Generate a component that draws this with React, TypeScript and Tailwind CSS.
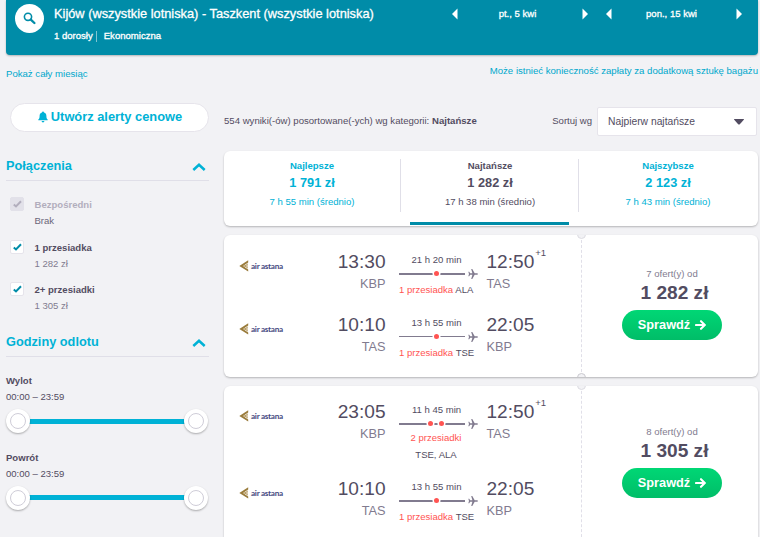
import React from 'react';

interface Leg {
  departure: string;
  from: string;
  arrival: string;
  to: string;
  nextDay?: string;
  duration: string;
  stops: string;
  via: string;
  stopCount: number;
  thin?: boolean;
}

interface Ticket {
  id: number;
  offers: string;
  price: string;
  legs: Leg[];
}

const returnLeg: Leg = {
  departure: '10:10', from: 'TAS', arrival: '22:05', to: 'KBP',
  duration: '13 h 55 min', stops: '1 przesiadka', via: 'TSE', stopCount: 1,
};

const tickets: Ticket[] = [
  {
    id: 1,
    offers: '7 ofert(y) od',
    price: '1 282 zł',
    legs: [
      { departure: '13:30', from: 'KBP', arrival: '12:50', to: 'TAS', nextDay: '+1', duration: '21 h 20 min', stops: '1 przesiadka', via: 'ALA', stopCount: 1 },
      { ...returnLeg, thin: true },
    ],
  },
  {
    id: 2,
    offers: '8 ofert(y) od',
    price: '1 305 zł',
    legs: [
      { departure: '23:05', from: 'KBP', arrival: '12:50', to: 'TAS', nextDay: '+1', duration: '11 h 45 min', stops: '2 przesiadki', via: 'TSE, ALA', stopCount: 2 },
      returnLeg,
    ],
  },
];

const tabs = [
  { label: 'Najlepsze', price: '1 791 zł', time: '7 h 55 min (średnio)', active: false },
  { label: 'Najtańsze', price: '1 282 zł', time: '17 h 38 min (średnio)', active: true },
  { label: 'Najszybsze', price: '2 123 zł', time: '7 h 43 min (średnio)', active: false },
];

const stopFilters = [
  { label: 'Bezpośredni', price: 'Brak', disabled: true },
  { label: '1 przesiadka', price: '1 282 zł', disabled: false },
  { label: '2+ przesiadki', price: '1 305 zł', disabled: false },
];

const Arrow: React.FC<{ left?: boolean }> = ({ left }) => (
  <svg width="6" height="12" viewBox="0 0 6 12" fill="#fff">
    <path d={left ? 'M5.5 .5v11L0 6z' : 'M.5 .5v11L6 6z'} />
  </svg>
);

const DatePicker: React.FC<{ date: string }> = ({ date }) => (
  <div className="flex h-5 w-[136px] items-center justify-between">
    <button className="flex"><Arrow left /></button>
    <span className="mr-[5px] [-webkit-text-stroke:0.3px]">{date}</span>
    <button className="flex"><Arrow /></button>
  </div>
);

const Header = () => (
  <header className="flex h-[55px] rounded-b bg-[#008ca8] pt-1 pl-[9px] text-white shadow-[0_1px_2px_rgba(0,0,0,0.25)]">
    <button className="flex size-[29px] shrink-0 items-center justify-center rounded-full bg-white">
      <svg width="13" height="13" viewBox="0 0 13 13" fill="none" stroke="#008ca8">
        <circle cx="5" cy="4.8" r="3.6" strokeWidth="1.6" />
        <path d="M7.8 7.6l3.6 3.4" strokeWidth="2.3" strokeLinecap="round" />
      </svg>
    </button>
    <div className="ml-[10px]">
      <h1 className="text-[12.8px] leading-5 whitespace-nowrap [-webkit-text-stroke:0.3px]">
        Kijów (wszystkie lotniska) - Taszkent (wszystkie lotniska)
      </h1>
      <div className="mt-1 flex items-center leading-4 [-webkit-text-stroke:0.3px]">
        <span>1 dorosły</span>
        <span className="mr-[7px] ml-[3px] h-[11px] w-px bg-[#7fc5d3]" />
        <span>Ekonomiczna</span>
      </div>
    </div>
    <div className="mr-4 ml-auto flex gap-[18px]">
      <DatePicker date="pt., 5 kwi" />
      <DatePicker date="pon., 15 kwi" />
    </div>
  </header>
);

const FilterTitle: React.FC<{ title: string }> = ({ title }) => (
  <div className="flex h-[27px] items-start justify-between border-b border-[#e0dfe8] pr-[3px]">
    <h2 className="text-[12.75px] leading-[23px] font-bold text-[#00b2d6]">{title}</h2>
    <svg className="mt-[9px]" width="14" height="8" viewBox="0 0 14 8" fill="none" stroke="#00b2d6" strokeWidth="2.5">
      <path d="M1.3 7L7 1.8 12.7 7" />
    </svg>
  </div>
);

const Checkbox: React.FC<{ disabled: boolean }> = ({ disabled }) => (
  <span className={`flex size-[14px] items-center justify-center rounded-[2px] border ${disabled ? 'border-[#e2e1e9] bg-[#e2e1e9]' : 'border-[#e6e4eb] bg-white'}`}>
    <svg width="9" height="8" viewBox="0 0 9 8" fill="none" stroke={disabled ? '#b2aebd' : '#008ca8'} strokeWidth="2">
      <path d="M.8 4.4l2.2 2L8 1.2" />
    </svg>
  </span>
);

const Handle = () => (
  <span className="z-10 flex size-6 items-center justify-center rounded-full bg-white shadow-[0_1px_2px_rgba(0,0,0,0.3)]">
    <span className="size-4 rounded-full border border-[#cfcdd8]" />
  </span>
);

const Slider: React.FC<{ label: string }> = ({ label }) => (
  <div className="h-[76.5px]">
    <p className="leading-4 font-bold">{label}</p>
    <p className="leading-4">00:00 – 23:59</p>
    <div className="mt-1 flex w-[202px] items-center">
      <Handle />
      <span className="-mx-1 h-[5px] flex-1 bg-[#00b2d6]" />
      <Handle />
    </div>
  </div>
);

const Sidebar = () => (
  <aside className="w-[203px] shrink-0 pt-[23px]">
    <button className="ml-1 flex h-[29px] w-[199px] items-center justify-center gap-[3px] rounded-full border-[1.5px] border-[#e6e4eb] bg-white pb-[2px] pl-px text-[12.85px] font-bold text-[#00b2d6]">
      <svg width="10" height="12" viewBox="0 0 10 12" fill="#00b2d6">
        <path d="M5 .5a1 1 0 0 1 1 1c1.7.5 2.4 1.9 2.4 3.5 0 2 .4 2.8 1.3 3.5v.8H.3v-.8C1.2 7.8 1.6 7 1.6 5c0-1.6.7-3 2.4-3.5a1 1 0 0 1 1-1zM3.6 10h2.8a1.4 1.4 0 0 1-2.8 0z" />
      </svg>
      <span>Utwórz alerty cenowe</span>
    </button>

    <div className="mt-[22px]">
      <FilterTitle title="Połączenia" />
      <div className="h-[149px] pt-4">
        {stopFilters.map(f => (
          <label key={f.label} className="ml-1 flex h-[42.7px] gap-[10.5px]">
            <Checkbox disabled={f.disabled} />
            <span className="flex flex-col leading-4">
              <span className={`font-bold ${f.disabled ? 'text-[#b2aebd]' : ''}`}>{f.label}</span>
              <span className={f.disabled ? 'text-[#6b6679]' : 'text-[#817b8f]'}>{f.price}</span>
            </span>
          </label>
        ))}
      </div>
      <FilterTitle title="Godziny odlotu" />
      <div className="pt-4">
        <Slider label="Wylot" />
        <Slider label="Powrót" />
      </div>
    </div>
  </aside>
);

const AirlineLogo = () => (
  <div className="flex h-[12px] w-[46px] items-center gap-[2px]">
    <svg className="shrink-0" width="10" height="12" viewBox="0 0 10 12" fill="none">
      <path d="M9.2 .3L.3 6l8.900 5.600V9.400L4 6l5.200-3.400z" fill="#9a7c3c" />
      <path d="M9 3.900L5.600 6 9 8.100M9 6H4" stroke="#b59a62" strokeWidth="1" />
    </svg>
    <span className="font-[Lato,sans-serif] text-[8.2px] leading-3 font-bold tracking-[-0.3px] whitespace-nowrap text-[#454a80]">air astana</span>
  </div>
);

const Plane = () => (
  <svg width="10" height="10" viewBox="0 0 10 10" fill="#817b8f">
    <path d="M3.2 0h1.100l2.400 4.200h2.400c1.100 0 1.100 1.600 0 1.600H6.700L4.300 10H3.200l1.200-4.200H2.200L1.200 7.200H.3L1 5 .3 2.800h.9l1 1.400h2.200z" />
  </svg>
);

const LegRow: React.FC<{ leg: Leg }> = ({ leg }) => (
  <div className="flex whitespace-nowrap">
    <div className="w-[76.5px] pt-[10px]"><AirlineLogo /></div>
    <div className="w-[70px] text-right">
      <p className="text-[19.1px] leading-[23px]">{leg.departure}</p>
      <p className="text-[12.75px] leading-[21px] text-[#817b8f]">{leg.from}</p>
    </div>
    <div className="ml-[13.5px] w-[79px]">
      <p className="h-[18px] pr-1 text-center leading-[19px]">{leg.duration}</p>
      <div className="mb-px flex h-[11px] items-center">
        <div className="relative flex h-[6px] w-[66px] items-center justify-center gap-[6px]">
          <span className={`absolute inset-x-0 bg-[#817b8f] ${leg.thin ? 'h-px' : 'h-[2px]'}`} />
          {Array.from({ length: leg.stopCount }, (_, i) => (
            <span key={i} className="relative left-[4px] size-[5px] rounded-full bg-[#ff5452] ring-[1.5px] ring-white" />
          ))}
        </div>
        <span className="ml-[3px]"><Plane /></span>
      </div>
      {leg.stopCount > 1 ? (
        <div className="-mt-px h-[34px] pr-[5px] text-center leading-[17px]">
          <p className="text-[#ff5452]">{leg.stops}</p>
          <p>{leg.via}</p>
        </div>
      ) : (
        <p className="h-[17px] leading-[19px]"><span className="text-[#ff5452]">{leg.stops}</span> {leg.via}</p>
      )}
    </div>
    <div className="ml-[8.5px]">
      <p className="flex text-[19.1px] leading-[23px]">
        {leg.arrival}
        {leg.nextDay && <span className="-mt-[9px] ml-px text-[9.56px]">{leg.nextDay}</span>}
      </p>
      <p className="text-[12.75px] leading-[21px] text-[#817b8f]">{leg.to}</p>
    </div>
  </div>
);

const TicketCard: React.FC<{ ticket: Ticket }> = ({ ticket }) => {
  const tall = ticket.legs[0].stopCount > 1;
  return (
    <article className={`relative flex overflow-hidden rounded-md bg-white shadow-[0_1px_2px_rgba(0,0,0,0.25)] ${tall ? 'h-[156px]' : 'h-[142px]'}`}>
      <div className={`flex w-[358px] flex-col border-r border-dashed border-[#e0dfe8] pl-[15px] ${tall ? 'gap-[14px] pt-[14px]' : 'gap-[16px] pt-[15px]'}`}>
        {ticket.legs.map((leg, i) => <div key={i} className={tall ? '' : 'h-[47px]'}><LegRow leg={leg} /></div>)}
      </div>
      <span className="absolute -top-[5px] left-[353px] size-[9px] rounded-full border border-[#dcdbe2] bg-[#f2f2f5]" />
      <span className="absolute -bottom-[5px] left-[353px] size-[9px] rounded-full border border-[#c9c8ce] bg-[#f2f2f5]" />
      <div className="ml-px flex flex-1 flex-col items-center justify-center pb-[6px] pl-[3px]">
        <p className="leading-4 text-[#817b8f]">{ticket.offers}</p>
        <p className="ml-[5px] text-[19.1px] leading-[21px] font-bold">{ticket.price}</p>
        <button className="mt-[7px] flex h-[30px] w-[100px] items-center justify-center gap-[5px] rounded-full bg-gradient-to-b from-[#00d775] to-[#00bd68] pb-px text-[12.75px] font-bold text-white">
          Sprawdź
          <svg width="11" height="10" viewBox="0 0 11 10" fill="none" stroke="#fff" strokeWidth="2.1" strokeLinecap="round">
            <path d="M1 5h8.500M6 1.200L9.800 5 6 8.800" />
          </svg>
        </button>
      </div>
    </article>
  );
};

const Results = () => (
  <main className="w-[534px] shrink-0 pt-[27px]">
    <div className="flex h-[29px] items-center">
      <p className="text-[9.6px]">554 wyniki(-ów) posortowane(-ych) wg kategorii: <b>Najtańsze</b></p>
      <span className="mr-[5px] ml-auto">Sortuj wg</span>
      <button className="mr-px flex h-[29px] w-[160px] items-center justify-between rounded-[2px] border border-[#e6e4eb] bg-white pr-3 pl-[10px] text-[10.3px]">
        Najpierw najtańsze
        <svg width="10" height="6" viewBox="0 0 10 6" fill="#524c61"><path d="M0 .5C0 0 .5 0 1 0h8c.5 0 1 0 1 .5L5.8 5.200c-.5.5-1.100.5-1.600 0z" /></svg>
      </button>
    </div>

    <div className="mt-[15px] flex h-[75px] rounded-md bg-white shadow-[0_1px_2px_rgba(0,0,0,0.25)]">
      {tabs.map((tab, i) => (
        <button key={tab.label} className={`relative flex w-[178px] flex-col items-center pt-[7px] pr-[2px] ${tab.active ? '' : 'text-[#00b2d6]'}`}>
          <span className="leading-4 font-bold">{tab.label}</span>
          <span className="text-[12.75px] leading-[17px] font-bold">{tab.price}</span>
          <span className="mt-[3px] leading-4">{tab.time}</span>
          {i > 0 && <span className="absolute top-2 -left-[2px] h-[53px] w-px bg-[#e0dfe8]" />}
          {tab.active && <span className="absolute bottom-px left-2 h-[3px] w-[159px] bg-[#008ca8]" />}
        </button>
      ))}
    </div>

    <div className="mt-[9px] flex flex-col gap-[9px]">
      {tickets.map(t => <TicketCard key={t.id} ticket={t} />)}
    </div>
  </main>
);

export default function App() {
  return (
    <div className="h-[537px] w-[760px] overflow-hidden bg-[#f2f2f5] pr-[2px] pl-[6px] font-['Liberation_Sans',Arial,sans-serif] text-[9.56px] text-[#524c61]">
      <Header />
      <div className="flex h-[25px] items-start justify-between pt-2 text-[9.6px] text-[#00a8cc]">
        <a className="mt-[3px] leading-4">Pokaż cały miesiąc</a>
        <a className="leading-4">Może istnieć konieczność zapłaty za dodatkową sztukę bagażu</a>
      </div>
      <div className="flex gap-[15px]">
        <Sidebar />
        <Results />
      </div>
    </div>
  );
}
